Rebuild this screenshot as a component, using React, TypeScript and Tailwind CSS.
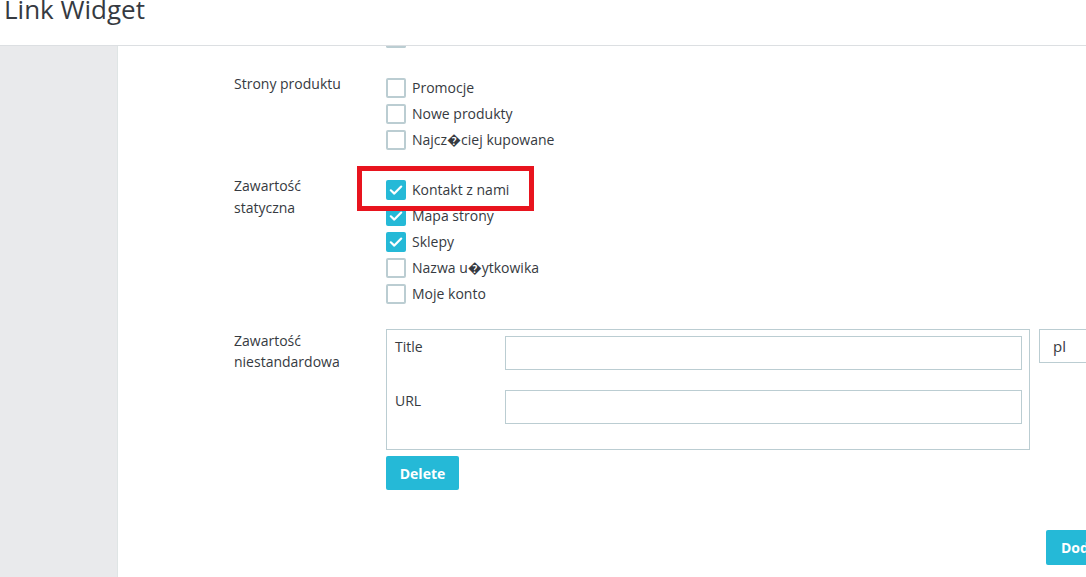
import React from "react";

const font = { fontFamily: '"Open Sans", "Noto Sans", sans-serif' };

function Box({ checked }: { checked?: boolean }) {
  if (checked) {
    return (
      <span className="flex h-[20px] w-[20px] shrink-0 items-center justify-center rounded-[2px] bg-[#25b9d7]">
        <svg width="20" height="20" viewBox="0 0 20 20" fill="none">
          <path d="M4.8 10.3 L8.3 13.6 L15.2 6.6" stroke="#fff" strokeWidth="2.2" strokeLinecap="round" strokeLinejoin="round" />
        </svg>
      </span>
    );
  }
  return <span className="block h-[20px] w-[20px] shrink-0 rounded-[2px] border-2 border-[#bbcdd2] bg-white" />;
}

function Item({ label, checked }: { label: string; checked?: boolean }) {
  return (
    <div className="flex h-[26px] items-center gap-[6px]">
      <Box checked={checked} />
      <span className="text-[14px] leading-[20px] text-[#363a41]">{label}</span>
    </div>
  );
}

export default function App() {
  return (
    <div className="relative h-[577px] w-[1086px] overflow-hidden bg-white" style={font}>
      <header className="flex h-[46px] flex-col border-b border-[#dcdfe2]">
        <h1 className="mt-[-4px] pl-[4px] text-[26px] leading-[26px] font-normal text-[#363a41]">Link Widget</h1>
      </header>
      <div className="flex h-[531px]">
        <aside className="w-[118px] shrink-0 border-r border-[#dfe5e5] bg-[#e9eaec]" />
        <main className="flex flex-1 flex-col pl-[116px]">
          <div className="ml-[152px] h-[2px] w-[20px] rounded-b-[2px] border-x-2 border-b-2 border-[#bbcdd2]" />
          <section className="mt-[27px] flex">
            <div className="-mt-[2px] w-[152px] text-[14px] leading-[21px] text-[#363a41]">Strony produktu</div>
            <div className="flex flex-col">
              <Item label="Promocje" />
              <Item label="Nowe produkty" />
              <Item label={"Najcz\uFFFDciej kupowane"} />
            </div>
          </section>
          <section className="mt-[24px] flex">
            <div className="-mt-[2px] w-[152px] text-[14px] leading-[22px] text-[#363a41]">
              Zawartość
              <br />
              statyczna
            </div>
            <div className="flex flex-col">
              <Item label="Kontakt z nami" checked />
              <Item label="Mapa strony" checked />
              <Item label="Sklepy" checked />
              <Item label={"Nazwa u\uFFFDytkowika"} />
              <Item label="Moje konto" />
            </div>
          </section>
          <section className="mt-[22px] flex">
            <div className="w-[152px] pt-[1px] text-[14px] leading-[21px] text-[#363a41]">
              Zawartość
              <br />
              niestandardowa
            </div>
            <div className="flex flex-col">
              <div className="flex items-start gap-[9px]">
                <div className="w-[644px] border border-[#bbcdd2] pt-[6px] pr-[7px] pb-[25px] pl-[8px]">
                  <div className="flex">
                    <div className="w-[110px] pt-[1px] text-[14px] leading-[20px] text-[#363a41]">Title</div>
                    <div className="h-[34px] flex-1 border border-[#bbcdd2]" />
                  </div>
                  <div className="mt-[20px] flex">
                    <div className="w-[110px] pt-[1px] text-[14px] leading-[20px] text-[#363a41]">URL</div>
                    <div className="h-[34px] flex-1 border border-[#bbcdd2]" />
                  </div>
                </div>
                <div className="flex h-[34px] w-[80px] shrink-0 items-center border border-[#bbcdd2] pl-[13px] text-[15px] text-[#363a41]">
                  pl
                </div>
              </div>
              <button className="mt-[6px] h-[34px] w-[73px] rounded-[2px] bg-[#25b9d7] text-[14px] font-bold text-white">Delete</button>
            </div>
          </section>
          <div className="mt-[40px] flex">
            <button className="ml-[812px] h-[35px] w-[100px] shrink-0 rounded-[2px] bg-[#25b9d7] pl-[15px] text-left text-[14px] font-bold text-white">
              Dodaj
            </button>
          </div>
        </main>
      </div>
      <div className="absolute left-[357px] top-[166px] h-[45px] w-[177px] border-[5px] border-[#e8141e]" />
    </div>
  );
}
